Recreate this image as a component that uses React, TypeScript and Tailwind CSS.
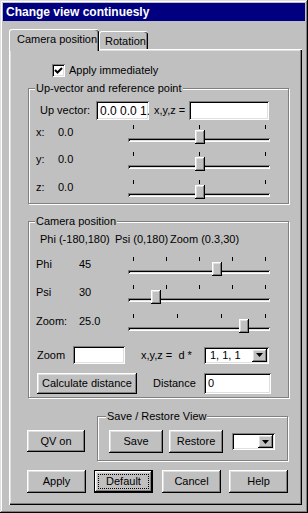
import type { ReactNode } from "react";

// win95 bevels
const raised = "shadow-[inset_-1px_-1px_#000,inset_1px_1px_#fff,inset_-2px_-2px_#808080,inset_2px_2px_#dfdfdf]";
const sunken = "shadow-[inset_1px_1px_#808080,inset_-1px_-1px_#fff,inset_2px_2px_#000,inset_-2px_-2px_#dfdfdf]";
const etched = "border border-[#808080] shadow-[1px_1px_0_#fff,inset_1px_1px_0_#fff]";

function Btn({ children, className = "" }: { children: ReactNode; className?: string }) {
  return (
    <div className={`flex items-center justify-center bg-[#c0c0c0] ${raised} ${className}`}>
      {children}
    </div>
  );
}

function Field({ text = "", className = "" }: { text?: string; className?: string }) {
  return (
    <div className={`flex items-center bg-white pl-[4px] overflow-hidden whitespace-nowrap ${sunken} ${className}`}>
      {text}
    </div>
  );
}

function Combo({ text = "", className = "" }: { text?: string; className?: string }) {
  return (
    <div className={`flex items-center justify-between bg-white p-[2px] ${sunken} ${className}`}>
      <span className="pl-[4px] leading-none">{text}</span>
      <div className={`flex h-full w-[15px] items-center justify-center bg-[#c0c0c0] ${raised}`}>
        <svg width="7" height="4" viewBox="0 0 7 4">
          <polygon points="0,0 7,0 3.5,4" fill="#000" />
        </svg>
      </div>
    </div>
  );
}

// trackbar: ticks from offset 5 to 137
function Slider({ ticks, frac }: { ticks: number; frac: number }) {
  const span = 132;
  const pos = Math.round(5 + frac * span);
  return (
    <div className="relative h-[20px] w-[142px]">
      {Array.from({ length: ticks }).map((_, i) => (
        <div key={i} className="absolute top-[1px] h-[4px] w-px bg-black" style={{ left: 5 + Math.round((i * span) / (ticks - 1)) }} />
      ))}
      <div className={`absolute left-0 right-0 top-[14px] h-[4px] ${sunken}`} />
      <div className={`absolute top-[6px] h-[14px] w-[10px] bg-[#c0c0c0] ${raised}`} style={{ left: pos - 4 }} />
    </div>
  );
}

function Row({ label, value, labelW, ticks, frac, className = "" }: { label: string; value: string; labelW: string; ticks: number; frac: number; className?: string }) {
  return (
    <div className={`flex h-[20px] items-start pl-[7px] ${className}`}>
      <span className={`mt-[2px] leading-[13px] ${labelW}`}>{label}</span>
      <span className={`mt-[2px] leading-[13px] ${labelW === "w-[22px]" ? "w-[70px]" : "w-[49px]"}`}>{value}</span>
      <Slider ticks={ticks} frac={frac} />
    </div>
  );
}

function Group({ title, left, className, children }: { title: string; left: string; className: string; children: ReactNode }) {
  return (
    <div className={`relative ${etched} ${className}`}>
      <span className={`absolute -top-[7px] bg-[#c0c0c0] px-[1px] leading-[13px] ${left}`}>{title}</span>
      {children}
    </div>
  );
}

export default function App() {
  return (
    <div className="flex h-[513px] w-[308px] flex-col bg-[#c0c0c0] p-[3px] font-['Liberation_Sans',Arial,sans-serif] text-[11px] text-black shadow-[inset_-1px_-1px_#000,inset_1px_1px_#dfdfdf,inset_-2px_-2px_#808080,inset_2px_2px_#fff]">
      <div className="flex h-[18px] shrink-0 items-center bg-[#000080] pl-[3px] text-[12px] font-bold text-white">
        Change view continuesly
      </div>

      <div className="ml-[6px] mt-[8px] w-[293px]">
        <div className="relative z-10 flex h-[20px] items-end">
          <div className="-mb-[2px] flex h-[22px] w-[90px] items-start rounded-t-[3px] border-l border-t border-white bg-[#c0c0c0] pl-[7px] pt-[3px] shadow-[inset_-1px_0_#000,inset_-2px_0_#808080]">
            <span className="leading-[13px]">Camera position</span>
          </div>
          <div className="flex h-[18px] w-[49px] items-start rounded-t-[3px] border-l border-t border-white bg-[#c0c0c0] pl-[5px] pt-[3px] shadow-[inset_-1px_0_#000,inset_-2px_0_#808080]">
            <span className="leading-[13px]">Rotation</span>
          </div>
        </div>

        <div className="flex h-[456px] flex-col shadow-[inset_1px_1px_#fff,inset_-1px_-1px_#000,inset_-2px_-2px_#808080,inset_2px_2px_#dfdfdf]">
          <div className="ml-[43px] mt-[15px] flex h-[13px] items-center">
            <div className={`relative h-[13px] w-[13px] bg-white ${sunken}`}>
              <svg className="absolute left-0 top-0" width="13" height="13" viewBox="0 0 13 13">
                <polyline points="3,6 5.5,8.5 10,4" fill="none" stroke="#000" strokeWidth="2" />
              </svg>
            </div>
            <span className="ml-[4px] leading-[13px]">Apply immediately</span>
          </div>

          <Group title="Up-vector and reference point" left="left-[6px]" className="ml-[19px] mt-[11px] h-[116px] w-[261px]">
            <div className="mt-[12px] flex h-[19px] items-center pl-[11px]">
              <span className="w-[56px]">Up vector:</span>
              <Field text="0.0 0.0 1." className="h-[19px] w-[53px] pl-[3px] text-[12px]" />
              <span className="ml-[5px] w-[35px]">x,y,z =</span>
              <Field className="h-[19px] w-[80px]" />
            </div>
            <Row className="mt-[4px]" label="x:" value="0.0" labelW="w-[22px]" ticks={3} frac={0.5} />
            <Row className="mt-[7px]" label="y:" value="0.0" labelW="w-[22px]" ticks={3} frac={0.5} />
            <Row className="mt-[8px]" label="z:" value="0.0" labelW="w-[22px]" ticks={3} frac={0.5} />
          </Group>

          <Group title="Camera position" left="left-[6px]" className="ml-[19px] mt-[17px] h-[177px] w-[261px]">
            <div className="mt-[11px] flex pl-[11px] leading-[13px]">
              <span className="w-[75px]">Phi (-180,180)</span>
              <span className="w-[55px]">Psi (0,180)</span>
              <span>Zoom (0.3,30)</span>
            </div>
            <Row className="mt-[10px]" label="Phi" value="45" labelW="w-[43px]" ticks={5} frac={0.625} />
            <Row className="mt-[8px]" label="Psi" value="30" labelW="w-[43px]" ticks={5} frac={30 / 180} />
            <Row className="mt-[9px]" label="Zoom:" value="25.0" labelW="w-[43px]" ticks={4} frac={24.7 / 29.7} />
            <div className="mt-[12px] flex h-[20px] items-center pl-[8px]">
              <span className="w-[36px]">Zoom</span>
              <Field className="h-[18px] w-[52px]" />
              <span className="ml-[16px] w-[63px] whitespace-pre">x,y,z =  d *</span>
              <Combo text="1, 1, 1" className="h-[17px] w-[65px]" />
            </div>
            <div className="mt-[8px] flex h-[21px] items-center pl-[8px]">
              <Btn className="h-[21px] w-[100px]">Calculate distance</Btn>
              <span className="ml-[16px] w-[51px]">Distance</span>
              <Field text="0" className="h-[21px] w-[67px]" />
            </div>
          </Group>

          <div className="ml-[18px] mt-[18px] flex items-start">
            <Btn className="mt-[14px] h-[22px] w-[58px]">QV on</Btn>
            <Group title="Save / Restore View" left="left-[8px]" className="ml-[12px] h-[45px] w-[191px]">
              <div className="mt-[13px] flex items-center pl-[11px]">
                <Btn className="h-[23px] w-[54px]">Save</Btn>
                <Btn className="ml-[6px] h-[23px] w-[54px]">Restore</Btn>
                <Combo className="ml-[9px] h-[17px] w-[43px]" />
              </div>
            </Group>
          </div>

          <div className="ml-[18px] mt-[9px] flex">
            <Btn className="h-[23px] w-[59px]">Apply</Btn>
            <div className={`relative ml-[8px] flex h-[23px] w-[59px] items-center justify-center border border-black bg-[#c0c0c0] ${raised}`}>
              <div className="absolute inset-[3px] border border-dotted border-black" />
              Default
            </div>
            <Btn className="ml-[9px] h-[23px] w-[59px]">Cancel</Btn>
            <Btn className="ml-[8px] h-[23px] w-[59px]">Help</Btn>
          </div>
        </div>
      </div>
    </div>
  );
}
